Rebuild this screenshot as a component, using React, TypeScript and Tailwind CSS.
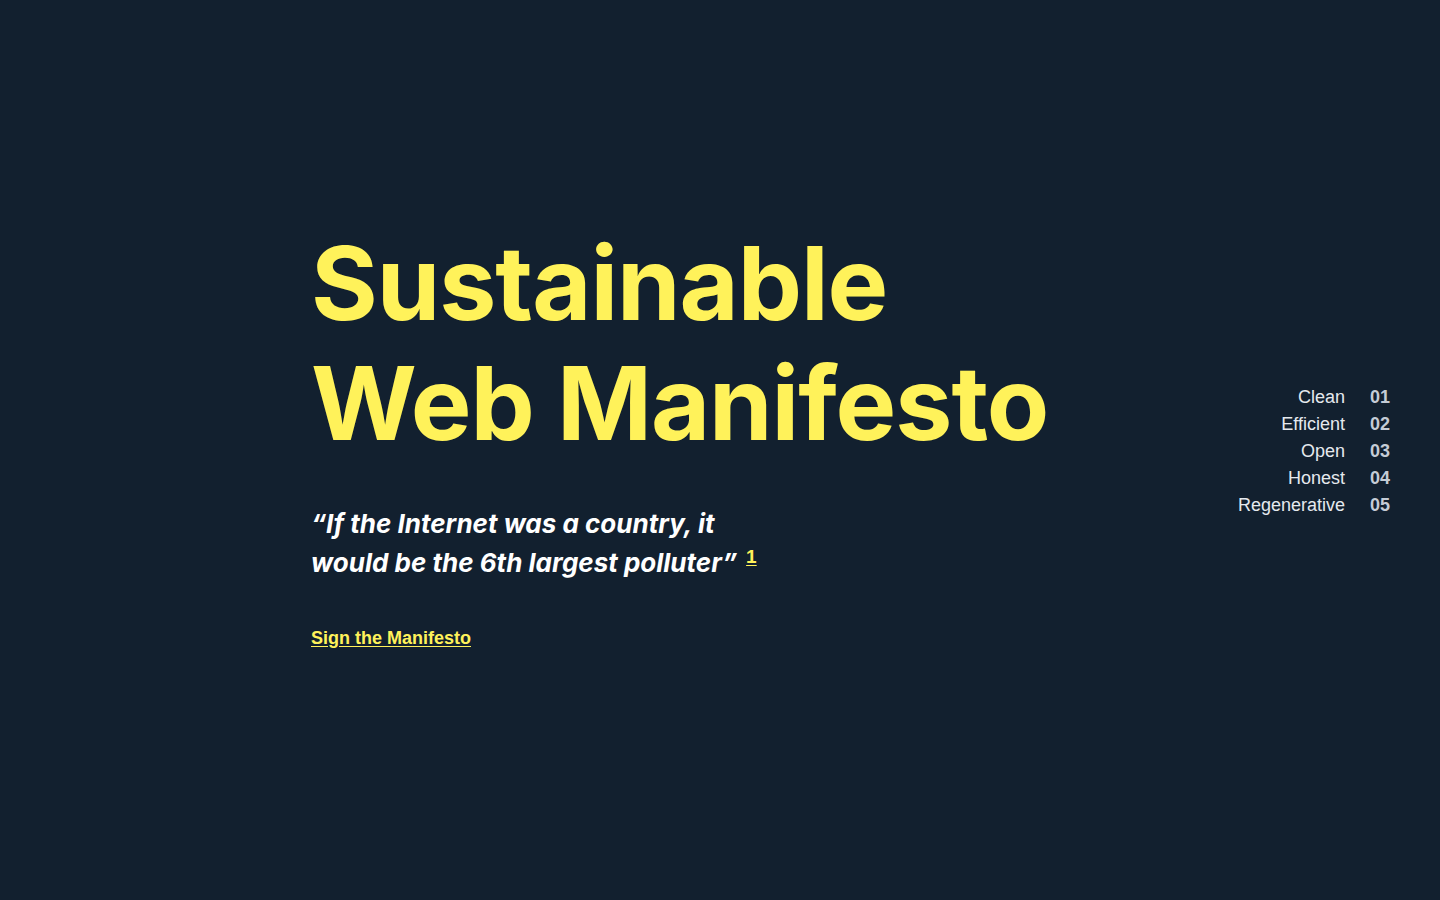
import React from 'react';

const principles = [
  { label: 'Clean', num: '01' },
  { label: 'Efficient', num: '02' },
  { label: 'Open', num: '03' },
  { label: 'Honest', num: '04' },
  { label: 'Regenerative', num: '05' },
];

const App: React.FC = () => {
  return (
    <div className="flex h-screen w-full items-center bg-[#12202f] pl-[311px] pr-[50px] font-['Inter',sans-serif]">
      <main className="flex-1 pb-[28px]">
        <h1 className="text-[102px] font-bold leading-[120px] tracking-[-0.01em] text-[#fff25a]">
          Sustainable
          <br />
          Web Manifesto
        </h1>

        <p className="mt-[41px] text-[26px] font-bold italic leading-[39px] text-white">
          “If the Internet was a country, it
          <br />
          would be the 6th largest polluter”
          <a
            href="#"
            className="relative -top-[9px] ml-[9px] font-['Liberation_Sans',sans-serif] text-[19px] font-bold not-italic leading-none text-[#fff25a] underline underline-offset-2"
          >
            1
          </a>
        </p>

        <a
          href="#"
          className="mt-[45px] inline-block font-['Liberation_Sans',Arial,sans-serif] text-[18px] font-bold leading-[22px] text-[#fff25a] underline underline-offset-2"
        >
          Sign the Manifesto
        </a>
      </main>

      {/* principles index */}
      <aside className="flex flex-col pt-[2px] font-['Liberation_Sans',Arial,sans-serif] text-[18px] leading-[27px]">
        {principles.map(p => (
          <div key={p.num} className="flex justify-end gap-[25px]">
            <span className="text-right text-[#e5e9ee]">{p.label}</span>
            <span className="w-[20px] font-bold text-[#c5ccd6]">{p.num}</span>
          </div>
        ))}
      </aside>
    </div>
  );
};

export default App;
